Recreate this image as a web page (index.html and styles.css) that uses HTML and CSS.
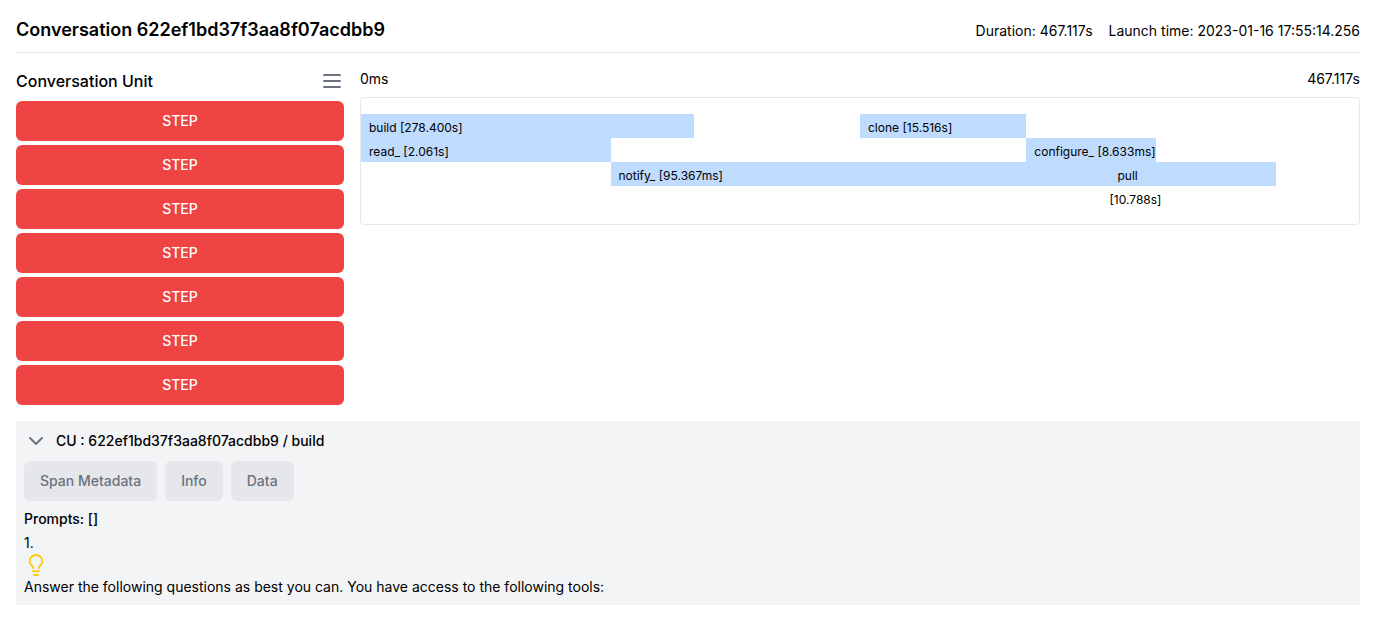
FILE: index.html
```html
<!DOCTYPE html>
<html lang="en">
<head>
<meta charset="utf-8">
<meta name="viewport" content="width=device-width, initial-scale=1">
<title>Conversation</title>
<link rel="stylesheet" href="styles.css">
</head>
<body>
<header class="page-header">
  <h1 class="page-title">Conversation 622ef1bd37f3aa8f07acdbb9</h1>
  <div class="page-meta">
    <span>Duration: 467.117s</span>
    <span>Launch time: 2023-01-16 17:55:14.256</span>
  </div>
</header>
<main>
  <div class="overview">
    <section class="units">
      <div class="units-header">
        <h2 class="units-title">Conversation Unit</h2>
        <button class="icon-button" type="button" aria-label="Menu">
          <svg class="icon" viewBox="0 0 24 24"><path d="M4 6h16M4 12h16M4 18h16"/></svg>
        </button>
      </div>
      <div class="steps">
        <button class="step" type="button">STEP</button>
        <button class="step" type="button">STEP</button>
        <button class="step" type="button">STEP</button>
        <button class="step" type="button">STEP</button>
        <button class="step" type="button">STEP</button>
        <button class="step" type="button">STEP</button>
        <button class="step" type="button">STEP</button>
      </div>
    </section>
    <section class="timeline">
      <div class="timeline-scale"><span>0ms</span><span>467.117s</span></div>
      <div class="chart">
        <div class="bar build"><span class="bar-label">build [278.400s]</span></div>
        <div class="bar clone"><span class="bar-label">clone [15.516s]</span></div>
        <div class="bar read"><span class="bar-label">read_ [2.061s]</span></div>
        <div class="bar configure"><span class="bar-label">configure_ [8.633ms]</span></div>
        <div class="bar notify"><span class="bar-label">notify_ [95.367ms]</span></div>
        <div class="bar pull"><span class="bar-label">pull [10.788s]</span></div>
      </div>
    </section>
  </div>
  <section class="details">
    <div class="details-header">
      <button class="icon-button" type="button" aria-label="Collapse">
        <svg class="icon" viewBox="0 0 24 24"><path d="M6 9l6 6 6-6"/></svg>
      </button>
      <h2 class="details-title">CU : 622ef1bd37f3aa8f07acdbb9 / build</h2>
    </div>
    <div class="tabs">
      <button class="tab" type="button">Span Metadata</button>
      <button class="tab" type="button">Info</button>
      <button class="tab" type="button">Data</button>
    </div>
    <h3 class="prompts-title">Prompts: []</h3>
    <div class="prompt">
      <div class="prompt-number">1.</div>
      <svg class="icon bulb" viewBox="0 0 24 24"><path d="M9.200 15C8.800 13.500 8 12.800 7 11.600 6.100 10.700 5.700 9.500 5.700 8.300 5.700 4.700 8.500 2 12 2s6.300 2.700 6.300 6.300c0 1.200-.4 2.400-1.300 3.300-1 1.200-1.800 1.900-2.200 3.400M9 18.200h6M10 22h4"/></svg>
      <p class="prompt-text">Answer the following questions as best you can. You have access to the following tools:</p>
    </div>
  </section>
</main>
</body>
</html>
```

FILE: styles.css
```css
* {
  box-sizing: border-box;
}

body {
  margin: 0;
  padding: 16px;
  background: #fff;
  color: #000;
  font-family: Inter, "Liberation Sans", sans-serif;
  font-size: 14px;
  line-height: 20px;
}

h1, h2, h3, p {
  margin: 0;
}

button {
  border: 0;
  font: inherit;
  cursor: pointer;
}

.icon {
  display: block;
  width: 24px;
  height: 24px;
  fill: none;
  stroke: #6b7280;
  stroke-width: 2;
  stroke-linecap: round;
  stroke-linejoin: round;
}

.icon-button {
  padding: 0;
  background: none;
}

.page-header {
  display: flex;
  align-items: baseline;
  justify-content: space-between;
  padding-bottom: 8px;
  border-bottom: 1px solid #e5e7eb;
}

.page-title {
  font-size: 18px;
  line-height: 28px;
  font-weight: 600;
}

.page-meta {
  display: flex;
  gap: 16px;
}

.overview {
  display: grid;
  grid-template-columns: calc(25% - 8px) 1fr;
  gap: 16px;
  padding: 16px 0;
}

.units-header {
  display: flex;
  align-items: center;
  justify-content: space-between;
  height: 24px;
  margin-bottom: 8px;
}

.units-title {
  font-size: 16px;
  line-height: 24px;
  font-weight: 500;
}

.steps {
  display: flex;
  flex-direction: column;
  gap: 4px;
}

.step {
  padding: 10px 16px;
  border-radius: 6px;
  background: #ef4444;
  color: #fff;
  font-weight: 500;
}

.timeline-scale {
  display: flex;
  justify-content: space-between;
  margin-bottom: 8px;
}

.chart {
  display: grid;
  grid-template-columns: repeat(12, minmax(0, 1fr));
  grid-template-rows: repeat(4, 24px);
  padding: 16px 0 14px;
  border: 1px solid #e5e7eb;
  border-radius: 4px;
  font-size: 16px;
  line-height: 24px;
}

.bar {
  height: 24px;
  background: #bfdbfe;
}

.bar-label {
  padding-left: 8px;
  font-size: 12px;
  line-height: 16px;
}

.build {
  grid-area: 1 / 1 / 2 / 5;
}

.clone {
  grid-area: 1 / 7 / 2 / 9;
}

.read {
  grid-area: 2 / 1 / 3 / 4;
}

.configure {
  grid-area: 2 / 9 / 3 / 10;
  width: max-content;
}

.notify {
  grid-area: 3 / 4 / 4 / 12;
}

.pull {
  grid-area: 3 / 10 / 4 / 11;
}

.details {
  padding: 8px;
  background: #f3f4f6;
}

.details-header {
  display: flex;
  align-items: center;
  gap: 8px;
  margin-bottom: 8px;
}

.details-title,
.prompts-title {
  font-size: 14px;
  font-weight: 500;
}

.tabs {
  display: flex;
  gap: 8px;
  margin-bottom: 8px;
}

.tab {
  padding: 10px 16px;
  border-radius: 6px;
  background: #e5e7eb;
  color: #6b7280;
  font-weight: 500;
}

.prompt {
  padding-top: 4px;
}

.bulb {
  stroke: #facc15;
}
```
